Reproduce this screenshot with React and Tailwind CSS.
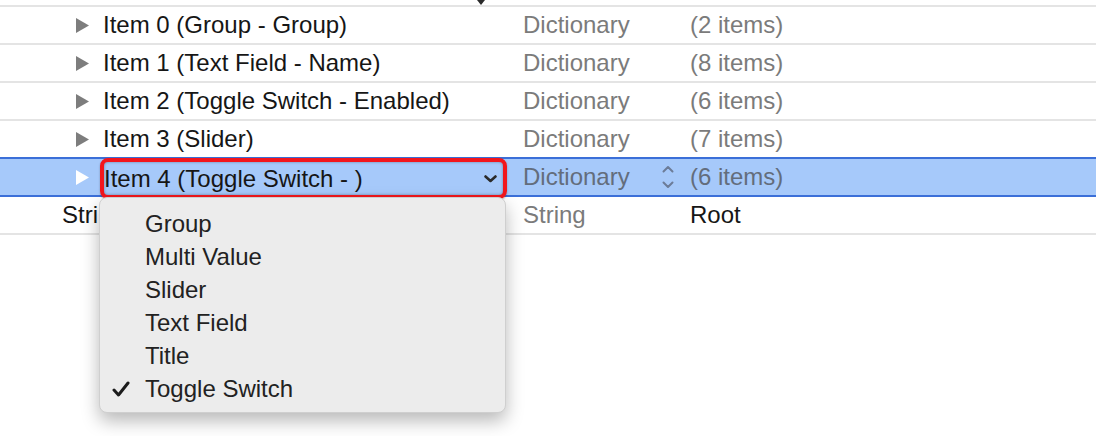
import React from 'react'

const font = { fontFamily: '"Liberation Sans", Arial, sans-serif' }

const rows = [
  { key: 'Item 0 (Group - Group)', type: 'Dictionary', value: '(2 items)' },
  { key: 'Item 1 (Text Field - Name)', type: 'Dictionary', value: '(8 items)' },
  { key: 'Item 2 (Toggle Switch - Enabled)', type: 'Dictionary', value: '(6 items)' },
  { key: 'Item 3 (Slider)', type: 'Dictionary', value: '(7 items)' },
]

const menuItems = ['Group', 'Multi Value', 'Slider', 'Text Field', 'Title', 'Toggle Switch']

const Disclosure = ({ white }) => (
  <svg width="13" height="15" viewBox="0 0 13 15" className="shrink-0">
    <path d="M0 0 L13 7.5 L0 15 Z" fill={white ? '#ffffff' : '#7d7d7d'} />
  </svg>
)

const Check = () => (
  <svg width="18" height="16" viewBox="0 0 18 16" className="absolute left-[12px] top-1/2 -translate-y-1/2">
    <path d="M2 9 L6.5 14 L16 2" fill="none" stroke="#1c1c1c" strokeWidth="3" strokeLinecap="round" strokeLinejoin="round" />
  </svg>
)

const Row = ({ row }) => (
  <div className="flex items-center h-[38px] border-b-2 border-[#e4e4e4] text-[24px]">
    <div className="w-[523px] shrink-0 flex items-center pl-[76px] gap-[14px] text-[#161616]">
      <Disclosure />
      <span className="whitespace-nowrap">{row.key}</span>
    </div>
    <div className="w-[167px] shrink-0 text-[#7b7b7b]">{row.type}</div>
    <div className="text-[#7b7b7b]">{row.value}</div>
  </div>
)

export default function App() {
  return (
    <div className="w-[1096px] h-[436px] bg-white overflow-hidden" style={font}>
      <div className="relative h-[5px] border-b-2 border-[#e4e4e4] box-content">
        <svg width="8" height="5" viewBox="0 0 8 5" className="absolute left-[477px] top-0">
          <path d="M0 0 L8 0 L4 5 Z" fill="#2a2a2a" />
        </svg>
      </div>

      {rows.map((row) => (
        <Row key={row.key} row={row} />
      ))}

      <div className="flex items-center h-[40px] border-y-2 border-[#3b6fd8] bg-[#a6c9fa] text-[24px] -mt-[2px] relative z-10">
        <div className="w-[523px] shrink-0 flex items-center pl-[76px] gap-[11px]">
          <Disclosure white />
          <div className="relative mt-[3px] w-[407px] h-[41px] shrink-0 rounded-[8px] border-[4px] border-[#f2161c] shadow-[inset_0_0_3px_rgba(0,0,0,0.35),0_1px_2px_rgba(0,0,0,0.3)] flex items-center pl-0 pr-[6px]">
            <span className="text-[#161616] whitespace-nowrap">Item 4 (Toggle Switch - )</span>
            <svg width="13" height="8" viewBox="0 0 13 8" className="ml-auto">
              <path d="M1.5 1.5 L6.5 6 L11.5 1.5" fill="none" stroke="#2b2b2b" strokeWidth="2.6" strokeLinecap="round" strokeLinejoin="round" />
            </svg>

            <div className="absolute left-[-5px] top-[35px] w-[407px] pt-[9px] pb-[7px] rounded-[8px] bg-[#ececec] border border-[#cfcfcf] shadow-[0_8px_18px_rgba(0,0,0,0.28)] z-20">
              {menuItems.map((item) => (
                <div key={item} className="relative h-[33px] flex items-center pl-[45px] text-[24px] text-[#222222]">
                  {item === 'Toggle Switch' && <Check />}
                  {item}
                </div>
              ))}
            </div>
          </div>
        </div>
        <div className="w-[167px] shrink-0 flex items-center pr-[16px] text-[#636d7c]">
          <span>Dictionary</span>
          <svg width="12" height="26" viewBox="0 0 12 26" className="ml-auto">
            <path d="M1.5 7.5 L6 3 L10.5 7.5" fill="none" stroke="#6c7c98" strokeWidth="2" strokeLinecap="round" strokeLinejoin="round" />
            <path d="M1.5 18.5 L6 23 L10.5 18.5" fill="none" stroke="#6c7c98" strokeWidth="2" strokeLinecap="round" strokeLinejoin="round" />
          </svg>
        </div>
        <div className="text-[#636d7c]">(6 items)</div>
      </div>

      <div className="flex items-center h-[38px] border-b-2 border-[#e4e4e4] text-[24px]">
        <div className="w-[523px] shrink-0 pl-[62px] text-[#161616]">
          <div className="w-[38px] overflow-hidden whitespace-nowrap">Stri</div>
        </div>
        <div className="w-[167px] shrink-0 text-[#7b7b7b]">String</div>
        <div className="text-[#161616]">Root</div>
      </div>
    </div>
  )
}
